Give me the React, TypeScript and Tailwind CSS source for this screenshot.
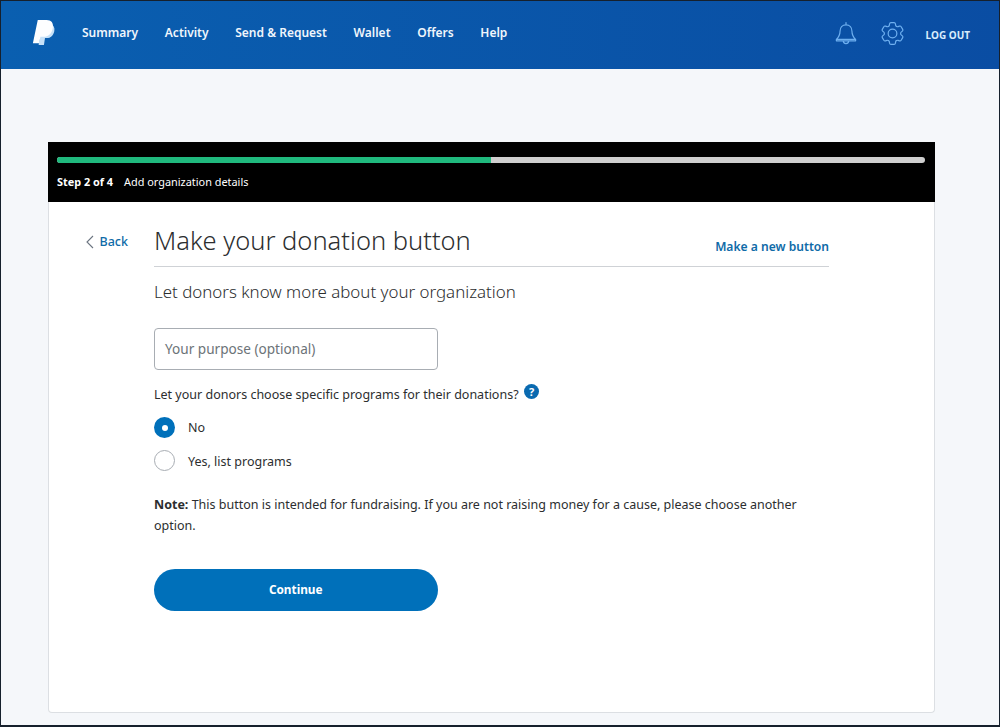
export default function App() {
  const font = "font-['Noto_Sans','Open_Sans',sans-serif]";
  return (
    <div className={`h-[727px] w-[1000px] overflow-hidden border border-b-2 border-[#16202c] bg-[#f5f7fa] ${font}`}>
      <header className="flex h-[68px] items-center bg-gradient-to-r from-[#0a5fb0] to-[#0a4da3] pl-[31px] pr-[29px]">
        <svg width="23" height="26" viewBox="0 0 26 28" preserveAspectRatio="none" className="mb-[4px] shrink-0">
          <path d="M21 4c3.500 1.500 5 4.500 4.200 8-1 4.500-4 7.500-8.500 7.500h-2L13.500 27H7.500L9.500 15h4c5 0 7.500-5 7.500-11z" fill="#c6e1f8" />
          <path d="M6.500 0h10c5.500 0 8 3 7 8.500-1 6-5 9.500-10.500 9.500H9.500L8 25H1z" fill="#fdfeff" />
        </svg>
        <nav className="mb-[5px] ml-[27px] flex items-center gap-[26.700px] text-[12px] font-semibold text-[#f0f6fc]">
          <span>Summary</span>
          <span>Activity</span>
          <span>Send &amp; Request</span>
          <span>Wallet</span>
          <span>Offers</span>
          <span>Help</span>
        </nav>
        <div className="ml-auto flex items-center">
          <svg width="22" height="25" viewBox="0 0 24 26" fill="none" stroke="#6fb0f0" strokeWidth="1.300" strokeLinecap="round" strokeLinejoin="round" className="mb-[3px]">
            <path d="M12 1v2.500M12 3.500c-4 0-6.500 3-6.500 7 0 4-1 6-4 9h21c-3-3-4-5-4-9 0-4-2.500-7-6.500-7zM1.500 19.500v1.500h21v-1.500M9 21c0 2 1.300 3 3 3s3-1 3-3" />
          </svg>
          <svg className="mb-[3px] ml-[21px]" width="29" height="29" viewBox="0 0 24 24" fill="none" stroke="#6fb0f0" strokeWidth="1" strokeLinecap="round" strokeLinejoin="round">
            <path d="M9.594 3.940c.09-.542.560-.940 1.110-.940h2.593c.550 0 1.020.398 1.110.940l.213 1.281c.063.374.313.686.645.870.074.040.147.083.220.127.325.196.720.257 1.075.124l1.217-.456a1.125 1.125 0 0 1 1.370.490l1.296 2.247a1.125 1.125 0 0 1-.260 1.431l-1.003.827c-.293.241-.438.613-.430.992a7.723 7.723 0 0 1 0 .255c-.008.378.137.750.430.991l1.004.827c.424.350.534.955.260 1.430l-1.298 2.247a1.125 1.125 0 0 1-1.369.491l-1.217-.456c-.355-.133-.750-.072-1.076.124a6.470 6.470 0 0 1-.220.128c-.331.183-.581.495-.644.869l-.213 1.281c-.090.543-.560.941-1.110.941h-2.594c-.550 0-1.019-.398-1.110-.940l-.213-1.281c-.062-.374-.312-.686-.644-.870a6.520 6.520 0 0 1-.220-.127c-.325-.196-.720-.257-1.076-.124l-1.217.456a1.125 1.125 0 0 1-1.369-.490l-1.297-2.247a1.125 1.125 0 0 1 .260-1.431l1.004-.827c.292-.240.437-.613.430-.991a6.932 6.932 0 0 1 0-.255c.007-.380-.138-.751-.430-.992l-1.004-.827a1.125 1.125 0 0 1-.260-1.430l1.297-2.247a1.125 1.125 0 0 1 1.370-.491l1.216.456c.356.133.751.072 1.076-.124.072-.044.146-.086.220-.128.332-.183.582-.495.644-.869l.214-1.280Z" />
            <circle cx="12" cy="12" r="3.600" />
          </svg>
          <span className="ml-[19px] text-[10px] font-bold text-[#d8ecfc]">LOG OUT</span>
        </div>
      </header>
      <main className="pl-[47px] pt-[73px]">
        <section className="h-[571px] w-[887px] rounded-b-[4px] border border-t-0 border-[#dcdfe3] bg-white">
          <div className="-mx-px flex h-[60px] flex-col bg-black pl-[9px] pr-[10px] pt-[15px]">
            <div className="flex h-[6px] overflow-hidden rounded-full bg-[#cfcfcf]">
              <div className="h-full w-1/2 bg-[#20b97e]" />
            </div>
            <p className="mt-[10px] text-[10.900px] leading-[18px] text-white">
              <span className="font-bold">Step 2 of 4</span>
              <span className="ml-[11px]">Add organization details</span>
            </p>
          </div>
          <div className="flex pt-[21px]">
            <div className="flex w-[105px] items-start justify-end pr-[26px] pt-[9px]">
              <svg width="9" height="14" viewBox="0 0 9 14" fill="none" stroke="#6b7480" strokeWidth="1.100" className="mr-[6px] mt-[3px]">
                <path d="M8 1 2 7l6 6" />
              </svg>
              <span className="text-[12.500px] font-medium leading-[20px] text-[#0f6ba8]">Back</span>
            </div>
            <div className="w-[675px]">
              <div className="flex h-[44px] items-start justify-between border-b border-[#cfd2d6]">
                <h1 className="text-[25.500px] font-light leading-[34px] text-[#2c2e2f]">Make your donation button</h1>
                <a className="pt-[14px] text-[12.100px] font-semibold leading-[20px] text-[#0f6ba8]">Make a new button</a>
              </div>
              <p className="mt-[13px] text-[16.900px] font-light leading-[24px] text-[#2c2e2f]">Let donors know more about your organization</p>
              <div className="mt-[24px] flex h-[42px] w-[283.500px] items-center rounded-[4px] border border-[#a8adb3] pl-[10px] text-[13.600px] text-[#6c7378]">
                Your purpose (optional)
              </div>
              <div className="mt-[16px] flex items-start text-[12.500px] leading-[18px] text-[#2c2e2f]">
                <span>Let your donors choose specific programs for their donations?</span>
                <svg width="15" height="15" viewBox="0 0 15 15" className="ml-[5px] mt-[-2px]">
                  <circle cx="7.500" cy="7.500" r="7.500" fill="#0a6ab0" />
                  <text x="7.500" y="11.500" textAnchor="middle" fontSize="11" fontWeight="700" fill="#fff">?</text>
                </svg>
              </div>
              <div className="mt-[13px] flex items-center text-[12.500px] text-[#2c2e2f]">
                <div className="flex h-[21px] w-[21px] items-center justify-center rounded-full bg-[#0070ba]">
                  <div className="h-[6px] w-[6px] rounded-full bg-white" />
                </div>
                <span className="ml-[13px] pt-[1px]">No</span>
              </div>
              <div className="mt-[12px] flex items-center text-[12.500px] text-[#2c2e2f]">
                <div className="h-[21px] w-[21px] rounded-full border border-[#a8adb3] bg-white" />
                <span className="ml-[13px] pt-[3px]">Yes, list programs</span>
              </div>
              <p className="mt-[22px] w-[660px] text-[12.500px] leading-[21px] text-[#2c2e2f]">
                <span className="font-bold">Note:</span> This button is intended for fundraising. If you are not raising money for a cause, please choose another option.
              </p>
              <button className="mt-[33px] flex h-[42px] w-[283.500px] items-center justify-center rounded-full bg-[#0070ba] pt-[1px] text-[11.800px] font-bold text-white">
                Continue
              </button>
            </div>
          </div>
        </section>
      </main>
    </div>
  );
}
